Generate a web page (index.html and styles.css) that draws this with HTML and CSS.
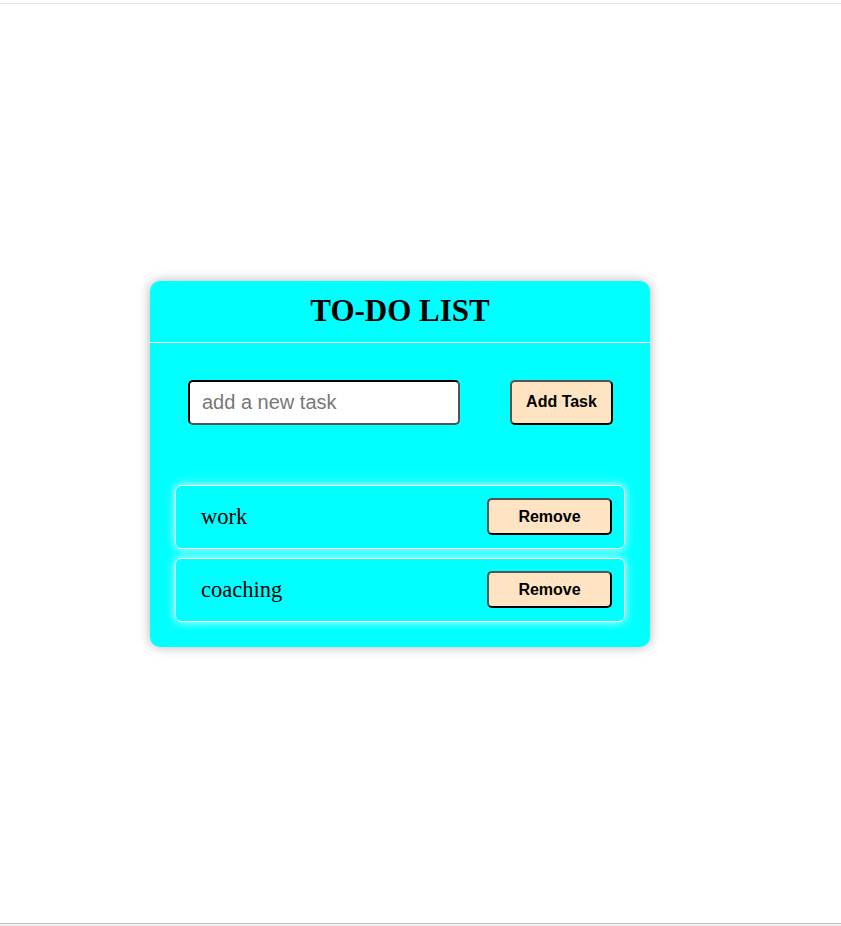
FILE: index.html
```html
<!DOCTYPE html>
<html>
<head>
<meta charset="utf-8">
<link rel="stylesheet" href="styles.css">
</head>
<body>
<div class="frame">
  <div class="card">
    <div class="header"><h1 class="title">TO-DO LIST</h1></div>
    <div class="entry">
      <input class="task-input" type="text" placeholder="add a new task">
      <button class="add-btn">Add Task</button>
    </div>
    <ul class="tasks">
      <li class="task"><span class="task-name">work</span><button class="remove-btn">Remove</button></li>
      <li class="task"><span class="task-name">coaching</span><button class="remove-btn">Remove</button></li>
    </ul>
  </div>
</div>
<div class="bottom-strip"></div>
</body>
</html>
```
FILE: styles.css
```css
html, body {
  margin: 0;
  padding: 0;
  background: #ffffff;
  height: 926px;
  overflow: hidden;
}
body {
  padding-top: 3px;
  box-sizing: border-box;
}
.frame {
  height: 921px;
  box-sizing: border-box;
  border-top: 1px solid #e6e6e6;
  border-bottom: 1px solid #c4c4c4;
  display: flex;
  align-items: center;
  padding-left: 150px;
}
.bottom-strip {
  height: 2px;
  background: #f0f0f4;
}
.card {
  width: 500px;
  height: 366px;
  box-sizing: border-box;
  background: #00ffff;
  border-radius: 10px;
  box-shadow: 0 0 12px rgba(0, 0, 0, 0.3);
  display: flex;
  flex-direction: column;
}
.header {
  height: 61px;
  border-bottom: 1px solid #ffffff;
  display: flex;
  align-items: center;
  justify-content: center;
}
.title {
  margin: 0;
  font-family: "Liberation Serif", serif;
  font-size: 31px;
  font-weight: bold;
  color: #000;
}
.entry {
  display: flex;
  align-items: center;
  justify-content: space-between;
  padding: 37px 37px 0 38px;
  height: 45px;
}
.task-input {
  width: 272px;
  height: 45px;
  box-sizing: border-box;
  border: 2px inset #000;
  border-radius: 5px;
  padding: 0 12px;
  font-family: "Liberation Sans", Arial, sans-serif;
  font-size: 20px;
  background: #fff;
  outline: none;
}
.task-input::placeholder {
  color: #777;
}
.add-btn {
  width: 103px;
  height: 45px;
  box-sizing: border-box;
  background: #ffe4c4;
  border: 2px outset #000;
  border-radius: 5px;
  font-family: "Liberation Sans", Arial, sans-serif;
  font-weight: bold;
  font-size: 16px;
  color: #000;
  padding: 0;
}
.tasks {
  list-style: none;
  margin: 60px 0 0 0;
  padding: 0 25px;
  display: flex;
  flex-direction: column;
  gap: 9px;
}
.task {
  height: 64px;
  box-sizing: border-box;
  border: 1px solid #ffffff;
  border-radius: 6px;
  box-shadow: 0 0 10px rgba(255, 255, 255, 0.85);
  display: flex;
  align-items: center;
  justify-content: space-between;
  padding: 0 12px 0 25px;
}
.task-name {
  font-family: "Liberation Serif", serif;
  font-size: 22.5px;
  color: #000;
}
.remove-btn {
  width: 125px;
  height: 37px;
  box-sizing: border-box;
  background: #ffe4c4;
  border: 2px outset #000;
  border-radius: 5px;
  font-family: "Liberation Sans", Arial, sans-serif;
  font-weight: bold;
  font-size: 16px;
  color: #000;
  padding: 0;
}
```
